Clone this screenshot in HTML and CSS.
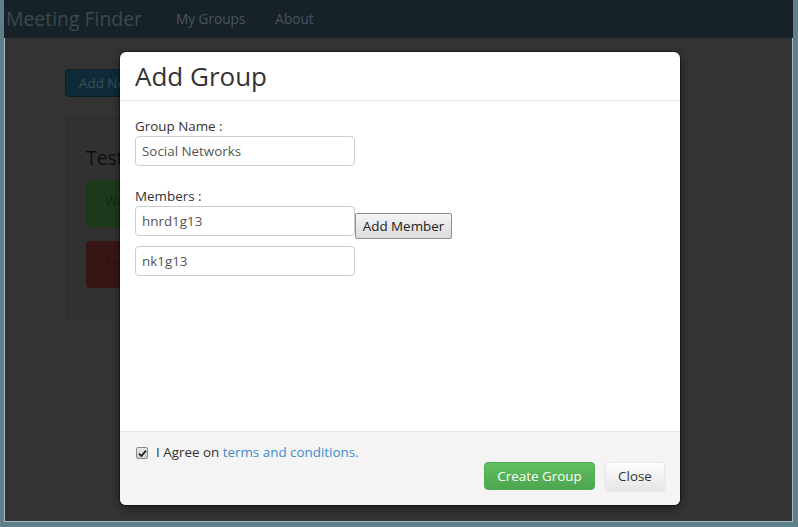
FILE: index.html
```html
<!DOCTYPE html>
<html>
<head>
<meta charset="utf-8">
<title>Meeting Finder</title>
<link rel="stylesheet" href="styles.css">
</head>
<body>
<div class="window">
  <div class="page">
    <nav class="navbar">
      <a class="brand">Meeting Finder</a>
      <a class="nav-link">My Groups</a>
      <a class="nav-link">About</a>
    </nav>
    <main class="container">
      <button class="btn-addnew">Add New</button>
      <section class="card">
        <h2 class="card-title">Test</h2>
        <div class="slot slot-green">We</div>
        <div class="slot slot-red">Fr</div>
      </section>
    </main>
  </div>

  <div class="modal">
    <header class="modal-header">
      <h1 class="modal-title">Add Group</h1>
    </header>
    <div class="modal-body">
      <label class="field-label">Group Name :</label>
      <div class="field-row"><input class="input" type="text" value="Social Networks"></div>
      <label class="field-label members-label">Members :</label>
      <div class="field-row"><input class="input" type="text" value="hnrd1g13"><button class="btn-sys">Add Member</button></div>
      <div class="field-row second"><input class="input" type="text" value="nk1g13"></div>
    </div>
    <footer class="modal-footer">
      <div class="agree">
        <span class="check"><svg width="9" height="9" viewBox="0 0 9 9"><path d="M1 4.6 L3.4 7 L8 1.6" fill="none" stroke="#222" stroke-width="1.8"/></svg></span>
        <span>I Agree on <a class="link">terms and conditions.</a></span>
      </div>
      <div class="actions">
        <button class="btn btn-success">Create Group</button>
        <button class="btn btn-default">Close</button>
      </div>
    </footer>
  </div>
</div>
</body>
</html>
```

FILE: styles.css
```css
* { box-sizing: border-box; }
html, body { margin: 0; padding: 0; }
body {
  font-family: "Open Sans", "Liberation Sans", sans-serif;
  font-size: 13.4px;
  background: #333;
}
.window {
  position: relative;
  width: 798px;
  height: 527px;
  border-left: 4px solid #5f7f8b;
  border-right: 5px solid #5f7f8b;
  border-bottom: 5px solid #5f7f8b;
  background: #333333;
  box-shadow: inset 1px 0 0 #a6bcc4, inset -1px 0 0 #a6bcc4, inset 0 -1px 0 #a6bcc4;
  overflow: hidden;
}
.page { height: 100%; }
.navbar {
  display: flex;
  align-items: center;
  height: 38px;
  background: #172228;
}
.brand {
  width: 157px;
  padding-left: 2px;
  font-size: 19.4px;
  color: #3c494f;
  line-height: 38px;
}
.nav-link {
  padding: 0 15px;
  color: #48555b;
  font-size: 13.6px;
  line-height: 38px;
}
.container {
  padding: 31px 0 0 61px;
}
.btn-addnew {
  display: block;
  height: 28px;
  width: 80px;
  padding: 0 0 0 13px;
  text-align: left;
  border: 1px solid #0a202a;
  border-radius: 4px;
  background: #0e2b37;
  color: #3a525c;
  font: 13.4px "Open Sans", sans-serif;
}
.card {
  margin: 21px 0 0 1px;
  width: 300px;
  height: 201px;
  border: 1px solid #2d2d2d;
  border-radius: 4px;
  background: #313131;
  padding: 27px 19px 0;
}
.card-title {
  margin: 0 0 10px;
  font-size: 19.4px;
  font-weight: normal;
  line-height: 24px;
  color: #0e0e0e;
}
.slot {
  height: 47px;
  width: 100px;
  border-radius: 4px;
  padding: 12px 0 0 19px;
  margin-bottom: 14px;
}
.slot-green { background: #1d3a1d; color: #112811; }
.slot-red { background: #391616; color: #2a0f0f; }

.modal {
  position: absolute;
  left: 116px;
  top: 52px;
  width: 560px;
  height: 453px;
  background: #fff;
  border-radius: 6px;
  box-shadow: 0 0 0 1px rgba(0,0,0,0.35), 0 3px 9px rgba(0,0,0,0.5);
  display: flex;
  flex-direction: column;
  overflow: hidden;
}
.modal-header {
  height: 49px;
  padding: 0 15px;
  border-bottom: 1px solid #e5e5e5;
}
.modal-title {
  margin: 0;
  font-size: 26px;
  font-weight: normal;
  line-height: 49px;
  color: #333;
}
.modal-body {
  flex: 1;
  padding: 15px 15px 0;
}
.field-label {
  display: block;
  line-height: 20px;
  color: #333;
}
.members-label { margin-top: 20px; }
.field-row {
  display: flex;
  align-items: flex-start;
}
.field-row.second { margin-top: 10px; }
.input {
  width: 220px;
  height: 30px;
  padding: 0 6px;
  border: 1px solid #ccc;
  border-radius: 4px;
  font: 13.4px "Open Sans", sans-serif;
  color: #555;
  background: #fff;
}
.btn-sys {
  margin-top: 7px;
  margin-bottom: -3px;
  height: 26px;
  width: 97px;
  padding: 0;
  border: 1px solid #8f8f8f;
  border-radius: 2px;
  background: linear-gradient(#f4f4f4, #dcdcdc);
  font: 13.4px "Open Sans", sans-serif;
  color: #222;
}
.modal-footer {
  height: 74px;
  border-top: 1px solid #e5e5e5;
  background: #f4f4f4;
  padding: 10px 15px 15px;
}
.agree {
  display: flex;
  align-items: center;
  height: 20px;
  color: #333;
}
.check {
  display: flex;
  align-items: center;
  justify-content: center;
  width: 12px;
  height: 12px;
  margin: 2px 8px 0 1px;
  border: 1px solid #8a8a8a;
  border-radius: 2px;
  background: linear-gradient(#e8e8e8, #cfcfcf);
}
.link { color: #428bca; }
.actions {
  display: flex;
  justify-content: flex-end;
  gap: 10px;
}
.btn {
  height: 28px;
  padding: 0;
  border-radius: 4px;
  white-space: nowrap;
  font: 13.4px "Open Sans", sans-serif;
}
.btn-success {
  width: 111px;
  color: #fff;
  border: 1px solid #4cae4c;
  background: linear-gradient(#5fbf5f, #4fa54f);
}
.btn-default {
  width: 60px;
  color: #333;
  border: 1px solid #e9e9e9;
  background: linear-gradient(#fff, #e6e6e6);
  box-shadow: 0 1px 2px rgba(0,0,0,0.12);
}
```
